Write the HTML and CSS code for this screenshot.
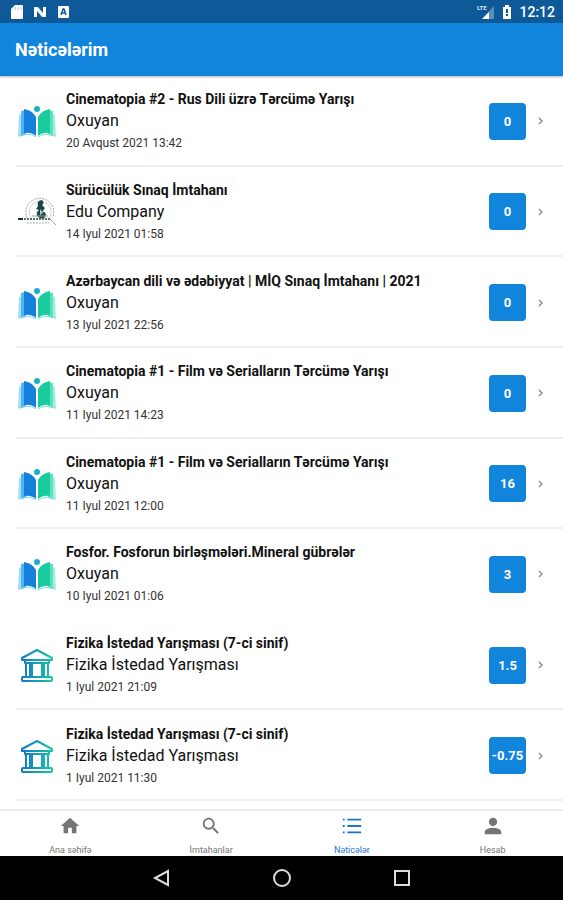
FILE: index.html
```html
<!DOCTYPE html>
<html lang="az">
<head>
    <meta charset="UTF-8">
    <meta name="viewport" content="width=device-width, initial-scale=1.0">
    <title>Nəticələrim</title>
    <link rel="stylesheet" href="styles.css">
</head>
<body>
    <!-- shared icons -->
    <svg class="sprite" aria-hidden="true">
        <defs>
            <linearGradient id="bankColor" gradientUnits="userSpaceOnUse" x1="3" y1="0" x2="35" y2="0">
                <stop offset="0" stop-color="#1275cc"/>
                <stop offset="1" stop-color="#18c9a2"/>
            </linearGradient>
            <symbol id="book" viewBox="0 0 38 38">
                <path d="M1 13l3-1v21l-4 2z" fill="#a5dcf8"/>
                <path d="M37 13l-3-1v21l4 2z" fill="#a2f0d8"/>
                <path d="M3 9l5-1v25l-5 1z" fill="#4fb4ef"/>
                <path d="M35 9l-5-1v25l5 1z" fill="#5ce2bb"/>
                <path d="M6 7q8 1 12 8v19q-5-4-12-3z" fill="#1580dc"/>
                <path d="M32 7q-8 1-12 8v19q5-4 12-3z" fill="#18cc9f"/>
                <path d="M1 34q9-4 17 1M37 34q-9-4-17 1" fill="none" stroke="#7bdde0"/>
                <circle cx="19" cy="7" r="3" fill="#1ab0cc"/>
            </symbol>
            <symbol id="bank" viewBox="0 0 38 38">
                <g fill="none" stroke="url(#bankColor)" stroke-width="2" stroke-linejoin="round">
                    <path d="M19 4L4 12v2h30v-2zM7 14v3h24v-3M8 17v14h4V17zM26 17v14h4V17zM14 17v14M24 17v14"/>
                    <rect x="4" y="31" width="30" height="4" rx="1"/>
                </g>
            </symbol>
            <symbol id="edu" viewBox="0 0 38 38">
                <path d="M9 25a14 14 0 1 1 26-1" fill="none" stroke="#9aa5a3" stroke-dasharray="2 1"/>
                <path d="M13 25a11 11 0 1 1 19-1" fill="none" stroke="#cdd4d2"/>
                <path d="M24 7q-6 1-4 6l-2 3 3 1q-4 3-1 7 6 4 8-2-1-4-4-3l3-4-3-3q3-2 0-5z" fill="#1c4740"/>
                <path d="M22 16l3 4-3 2z" fill="#b5cdc8"/>
                <path d="M0 26h5" stroke="#15302d" stroke-width="2"/>
                <path d="M6 26h27" stroke="#56716c" stroke-width="2" stroke-dasharray="2 1"/>
                <path d="M9 30h22" stroke="#aab3b1" stroke-dasharray="2 1"/>
                <path d="M32 26l6 6M14 23h16" stroke="#9aa5a3"/>
            </symbol>
            <symbol id="chevron" viewBox="0 0 8 10">
                <path d="M2 2l3 3-3 3" fill="none" stroke="#8a8a8a" stroke-width="1.4"/>
            </symbol>
        </defs>
    </svg>

    <div class="app">
        <div class="status-bar">
            <svg width="14" height="16" viewBox="0 0 14 16"><path d="M5 1h7q1 0 1 1v12q0 1-1 1H2q-1 0-1-1V5z" fill="#fff"/><path d="M5 3v3M8 3v3M11 3v3" stroke="#b3c8dc"/></svg>
            <svg width="14" height="16" viewBox="0 0 14 16"><path d="M1 3h4l5 6V3h3v10H9L4 7v6H1z" fill="#fff"/></svg>
            <svg width="14" height="16" viewBox="0 0 14 16"><rect x="2" y="2" width="11" height="12" rx="1" fill="#fff"/><path d="M5 11l2-6h1l2 6M6 9h3" fill="none" stroke="#0e5a99" stroke-width="1.5"/></svg>
            <div class="status-right">
                <svg width="18" height="16" viewBox="0 0 18 16"><path d="M17 2v13H5z" fill="#5d8fbb"/><path d="M12 8v7H5z" fill="#fff"/><text x="0" y="6" class="lte">LTE</text></svg>
                <svg width="10" height="16" viewBox="0 0 10 16"><path d="M3 1h4v2h2v12H1V3h2z" fill="#fff"/><path d="M5 5v4M5 10v2" stroke="#0e5a99" stroke-width="2"/></svg>
                <span>12:12</span>
            </div>
        </div>

        <header>
            <h1>Nəticələrim</h1>
        </header>

        <main class="results">
            <a href="#" class="result">
                <svg class="logo"><use href="#book"/></svg>
                <div class="info">
                    <h2>Cinematopia #2 - Rus Dili üzrə Tərcümə Yarışı</h2>
                    <p class="company">Oxuyan</p>
                    <p class="date">20 Avqust 2021 13:42</p>
                </div>
                <span class="score">0</span>
                <svg class="chevron"><use href="#chevron"/></svg>
            </a>
            <a href="#" class="result">
                <svg class="logo"><use href="#edu"/></svg>
                <div class="info">
                    <h2>Sürücülük Sınaq İmtahanı</h2>
                    <p class="company">Edu Company</p>
                    <p class="date">14 Iyul 2021 01:58</p>
                </div>
                <span class="score">0</span>
                <svg class="chevron"><use href="#chevron"/></svg>
            </a>
            <a href="#" class="result">
                <svg class="logo"><use href="#book"/></svg>
                <div class="info">
                    <h2>Azərbaycan dili və ədəbiyyat | MİQ Sınaq İmtahanı | 2021</h2>
                    <p class="company">Oxuyan</p>
                    <p class="date">13 Iyul 2021 22:56</p>
                </div>
                <span class="score">0</span>
                <svg class="chevron"><use href="#chevron"/></svg>
            </a>
            <a href="#" class="result">
                <svg class="logo"><use href="#book"/></svg>
                <div class="info">
                    <h2>Cinematopia #1 - Film və Serialların Tərcümə Yarışı</h2>
                    <p class="company">Oxuyan</p>
                    <p class="date">11 Iyul 2021 14:23</p>
                </div>
                <span class="score">0</span>
                <svg class="chevron"><use href="#chevron"/></svg>
            </a>
            <a href="#" class="result">
                <svg class="logo"><use href="#book"/></svg>
                <div class="info">
                    <h2>Cinematopia #1 - Film və Serialların Tərcümə Yarışı</h2>
                    <p class="company">Oxuyan</p>
                    <p class="date">11 Iyul 2021 12:00</p>
                </div>
                <span class="score">16</span>
                <svg class="chevron"><use href="#chevron"/></svg>
            </a>
            <a href="#" class="result no-line">
                <svg class="logo"><use href="#book"/></svg>
                <div class="info">
                    <h2>Fosfor. Fosforun birləşmələri.Mineral gübrələr</h2>
                    <p class="company">Oxuyan</p>
                    <p class="date">10 Iyul 2021 01:06</p>
                </div>
                <span class="score">3</span>
                <svg class="chevron"><use href="#chevron"/></svg>
            </a>
            <a href="#" class="result">
                <svg class="logo"><use href="#bank"/></svg>
                <div class="info">
                    <h2>Fizika İstedad Yarışması (7-ci sinif)</h2>
                    <p class="company">Fizika İstedad Yarışması</p>
                    <p class="date">1 Iyul 2021 21:09</p>
                </div>
                <span class="score">1.5</span>
                <svg class="chevron"><use href="#chevron"/></svg>
            </a>
            <a href="#" class="result">
                <svg class="logo"><use href="#bank"/></svg>
                <div class="info">
                    <h2>Fizika İstedad Yarışması (7-ci sinif)</h2>
                    <p class="company">Fizika İstedad Yarışması</p>
                    <p class="date">1 Iyul 2021 11:30</p>
                </div>
                <span class="score">-0.75</span>
                <svg class="chevron"><use href="#chevron"/></svg>
            </a>
        </main>

        <nav class="tabs">
            <a href="#">
                <svg width="24" height="24" viewBox="0 0 24 24"><path d="M10 20v-6h4v6h5v-8h3L12 3 2 12h3v8z" fill="currentColor"/></svg>
                <span>Ana səhifə</span>
            </a>
            <a href="#">
                <svg width="24" height="24" viewBox="0 0 24 24"><path d="M15.5 14h-.79l-.28-.27A6.47 6.47 0 0 0 16 9.500 6.500 6.500 0 1 0 9.500 16c1.610 0 3.090-.59 4.230-1.570l.27.28v.79l5 4.990L20.490 19zm-6 0C7.010 14 5 11.990 5 9.500S7.010 5 9.500 5 14 7.010 14 9.500 11.990 14 9.500 14z" fill="currentColor"/></svg>
                <span>İmtahanlar</span>
            </a>
            <a href="#" class="active">
                <svg width="24" height="24" viewBox="0 0 24 24"><path d="M2 5h2M2 12h2M2 19h2M7 5h15M7 12h15M7 19h15" stroke="currentColor" stroke-width="2"/></svg>
                <span>Nəticələr</span>
            </a>
            <a href="#">
                <svg width="24" height="24" viewBox="0 0 24 24"><path d="M12 12a4.500 4.500 0 1 0 0-9 4.500 4.500 0 0 0 0 9zm0 2c-3 0-9 1.500-9 4.500V21h18v-2.500c0-3-6-4.500-9-4.500z" fill="currentColor"/></svg>
                <span>Hesab</span>
            </a>
        </nav>

        <div class="system-bar">
            <button aria-label="Geri"><svg width="20" height="20" viewBox="0 0 20 20"><path d="M16 3v14L3 10z"/></svg></button>
            <button aria-label="Ev"><svg width="20" height="20" viewBox="0 0 20 20"><circle cx="10" cy="10" r="8"/></svg></button>
            <button aria-label="Son tətbiqlər"><svg width="20" height="20" viewBox="0 0 20 20"><rect x="3" y="3" width="14" height="14"/></svg></button>
        </div>
    </div>
</body>
</html>
```
FILE: styles.css
```css
body {
    font-family: Roboto, "Noto Sans", sans-serif;
    background-color: #fff;
    color: #111;
    margin: 0;
}

h1, h2, p {
    margin: 0;
}

a {
    color: inherit;
    text-decoration: none;
}

.sprite {
    position: absolute;
    width: 0;
    height: 0;
}

.app {
    min-height: 100vh;
    display: flex;
    flex-direction: column;
}

.status-bar {
    display: flex;
    align-items: center;
    gap: 9px;
    height: 23px;
    padding: 0 8px 0 10px;
    background-color: #0e5a99;
    color: #fff;
    font-size: 14px;
    font-weight: 500;
}

.status-right {
    display: flex;
    align-items: center;
    gap: 7px;
    margin-left: auto;
}

.lte {
    fill: #d5e2ee;
    font-size: 6px;
    font-weight: bold;
}

header {
    display: flex;
    align-items: center;
    height: 53px;
    padding: 0 15px;
    background-color: #1184dc;
    color: #fff;
    box-shadow: 0 1px 2px rgba(0, 0, 0, 0.3);
}

h1 {
    font-size: 18px;
    font-weight: bold;
}

.results {
    flex: 1;
    display: flex;
    flex-direction: column;
    padding-bottom: 8px;
}

.result {
    flex: 1;
    display: flex;
    align-items: center;
    padding-right: 18px;
    padding-left: 18px;
    background: linear-gradient(#efefef, #efefef) 16px 100% / 100% 2px no-repeat;
}

.result.no-line {
    background: none;
}

.logo {
    width: 38px;
    height: 38px;
    margin-right: 10px;
}

.info {
    flex: 1;
}

h2 {
    font-size: 14px;
    line-height: 20px;
    font-weight: bold;
}

.company {
    font-size: 16px;
    line-height: 24px;
}

.date {
    font-size: 12px;
    line-height: 20px;
    color: #333;
}

.score {
    display: flex;
    align-items: center;
    justify-content: center;
    width: 37px;
    height: 37px;
    margin-right: 11px;
    border-radius: 4px;
    background-color: #1184dc;
    color: #fff;
    font-size: 13px;
    font-weight: bold;
}

.chevron {
    width: 8px;
    height: 10px;
}

.tabs {
    display: flex;
    height: 45px;
    border-top: 2px solid #ececec;
    color: #757575;
}

.tabs a {
    flex: 1;
    display: flex;
    flex-direction: column;
    align-items: center;
    justify-content: space-between;
    padding-top: 4px;
    font-size: 9px;
    line-height: 12px;
}

.tabs svg {
    width: 22px;
    height: 22px;
}

.tabs .active {
    color: #1976d2;
}

.system-bar {
    display: flex;
    justify-content: center;
    align-items: center;
    gap: 100px;
    height: 44px;
    background-color: #000;
}

.system-bar button {
    display: flex;
    padding: 0;
    border: none;
    background: none;
    cursor: pointer;
}

.system-bar svg {
    fill: none;
    stroke: #ddd;
    stroke-width: 2;
}
```
